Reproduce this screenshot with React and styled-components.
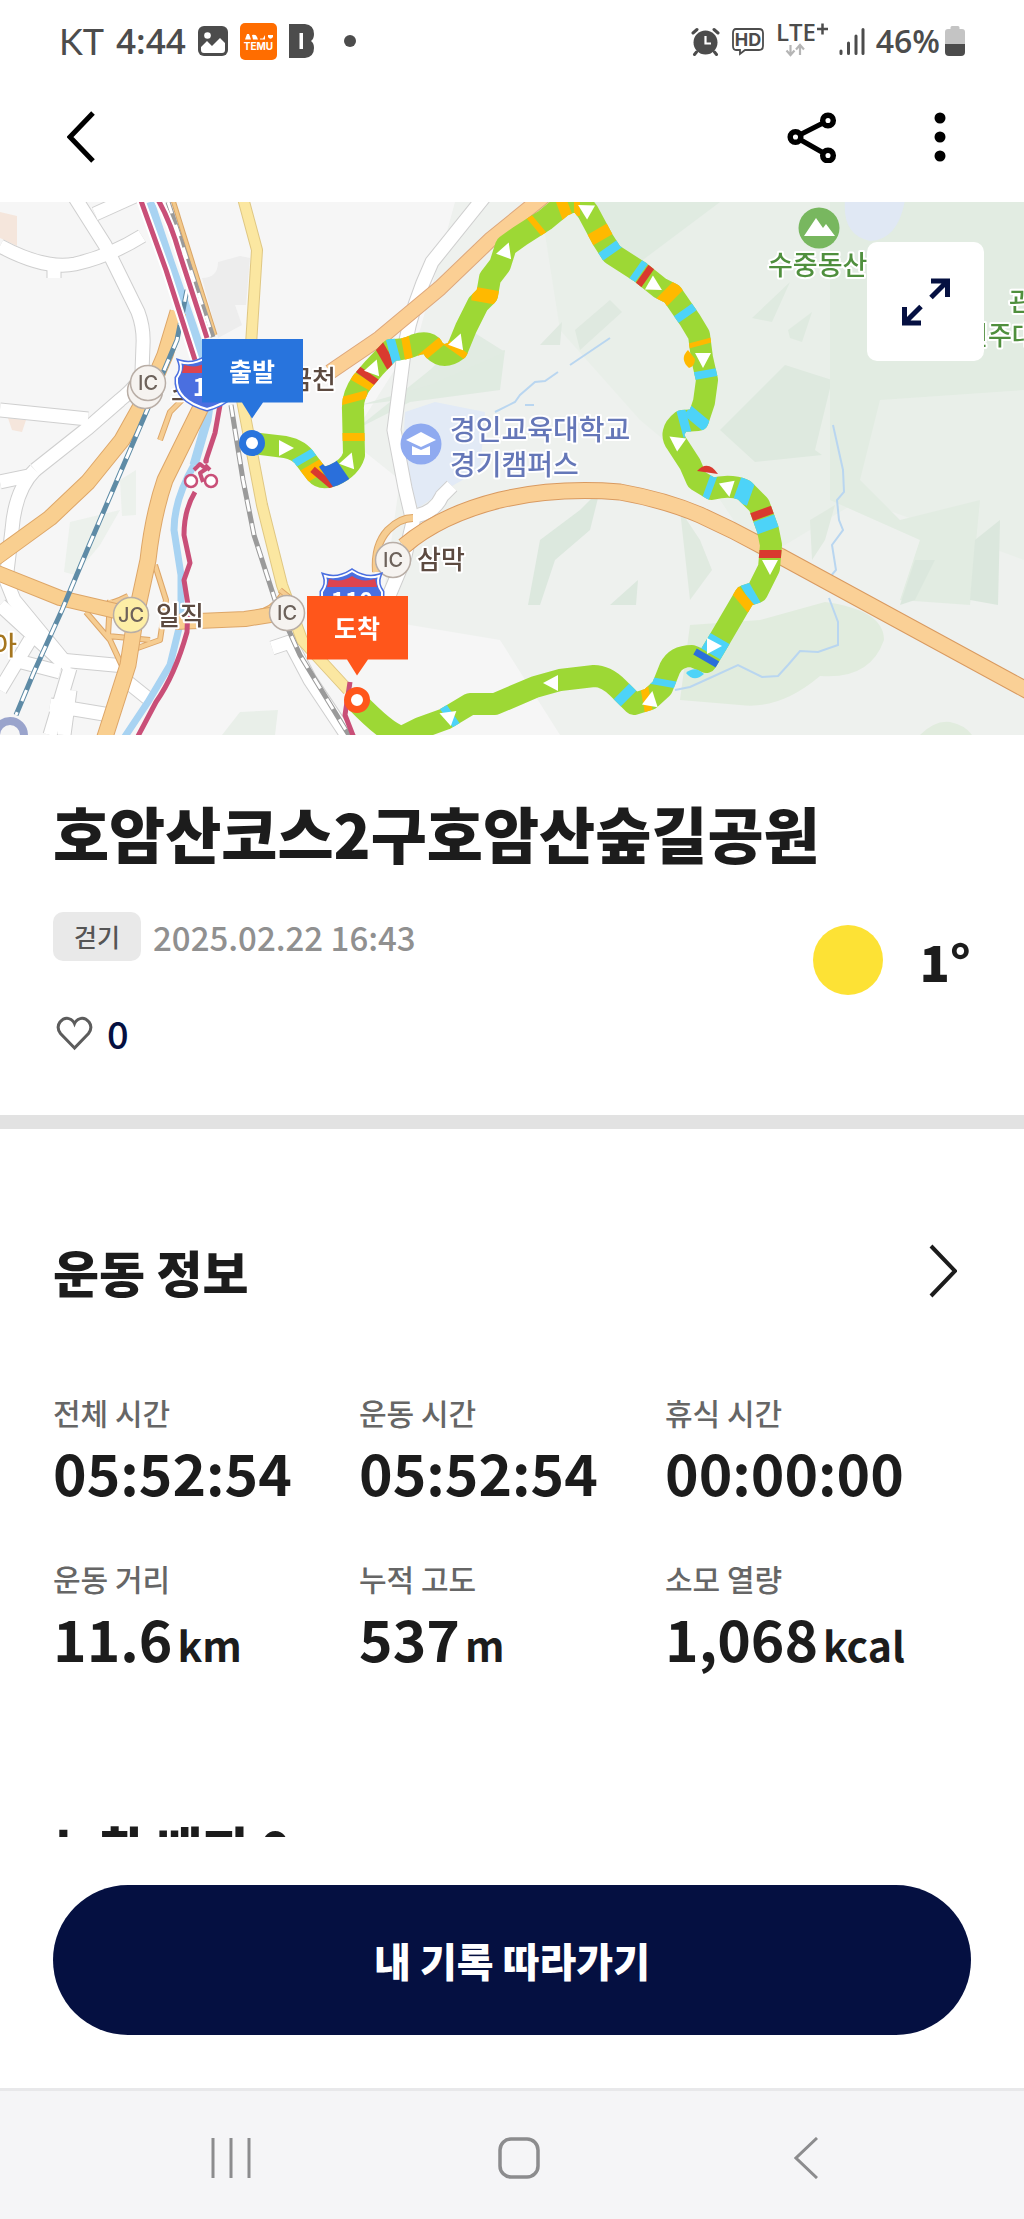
import React from "react";
import styled, { createGlobalStyle } from "styled-components";

const sans = `"Noto Sans CJK KR", "Noto Sans", sans-serif`;
const ink = "#1c1c1c";
const navy = "#051041";

const GlobalStyle = createGlobalStyle`
  *, *::before, *::after { box-sizing: border-box; }
  body { margin: 0; background: #fff; color: ${ink}; font-family: ${sans}; }
  h1, h2, p, dl, dt, dd { margin: 0; }
  button { border: 0; padding: 0; background: none; font-family: inherit; cursor: pointer; }
  svg { display: block; flex: none; }
`;

const Shell = styled.div`
  display: flex;
  flex-direction: column;
  height: 100vh;
`;

const StatusBar = styled.div`
  display: flex;
  justify-content: space-between;
  align-items: center;
  flex: none;
  height: 82px;
  padding: 0 59px;
  color: #4c4c4c;
`;

const StatusGroup = styled.div`
  display: flex;
  align-items: center;
  gap: ${(p) => p.$gap}px;
`;

const StatusText = styled.span`
  font-family: ${(p) => (p.$light ? `Lato, sans-serif` : `"Open Sans", sans-serif`)};
  font-size: ${(p) => p.$size}px;
  font-weight: ${(p) => (p.$light ? 400 : 600)};
  line-height: 40px;
`;

const AppBar = styled.header`
  display: flex;
  justify-content: space-between;
  align-items: center;
  flex: none;
  height: 120px;
  padding: 0 56px 10px 53px;
`;

const BarActions = styled.div`
  display: flex;
  gap: 72px;
`;

const IconButton = styled.button`
  display: flex;
  align-items: center;
  justify-content: center;
  width: 56px;
  height: 60px;
`;

const Content = styled.main`
  flex: 1;
  min-height: 0;
  overflow-y: auto;
  scrollbar-width: none;
`;

const MapPanel = styled.div`
  position: relative;
  aspect-ratio: 1024 / 533;
  overflow: hidden;
  background: #f5f5f5;
`;

const MapSvg = styled.svg`
  width: 100%;
  height: 100%;
  font-family: ${sans};
`;

const ExpandButton = styled.button`
  position: absolute;
  top: 40px;
  right: 40px;
  display: flex;
  align-items: center;
  justify-content: center;
  width: 117px;
  height: 119px;
  border-radius: 10px;
  background: #fff;
`;

const Summary = styled.section`
  padding: 61px 53px 62px;
  border-bottom: 14px solid #e2e2e2;
`;

const CourseTitle = styled.h1`
  font-size: 61px;
  font-weight: 900;
  line-height: 74px;
`;

const SummaryRow = styled.div`
  display: flex;
  justify-content: space-between;
  align-items: flex-start;
  margin-top: 42px;
`;

const MetaColumn = styled.div`
  display: flex;
  flex-direction: column;
  gap: 52px;
`;

const MetaLine = styled.div`
  display: flex;
  align-items: center;
  gap: 12px;
`;

const Badge = styled.span`
  padding: 0 21px;
  border-radius: 10px;
  background: #e9e9e9;
  color: #555;
  font-size: 25px;
  font-weight: 500;
  line-height: 49px;
`;

const DateText = styled.time`
  color: #909090;
  font-size: 33px;
  font-weight: 500;
  line-height: 48px;
`;

const LikeButton = styled.button`
  display: flex;
  align-items: center;
  align-self: flex-start;
  gap: 12px;
  height: 40px;
  color: ${navy};
  font-size: 38px;
  font-weight: 500;
  line-height: 40px;
`;

const Weather = styled.div`
  display: flex;
  align-items: center;
  gap: 36px;
  height: 96px;
  font-size: 50px;
  font-weight: 900;
  line-height: 80px;
`;

const Sun = styled.span`
  width: 70px;
  height: 70px;
  border-radius: 50%;
  background: #fde235;
`;

const Info = styled.section`
  padding: 112px 53px 0;
`;

const InfoHeader = styled.div`
  display: flex;
  justify-content: space-between;
  align-items: center;
`;

const SectionTitle = styled.h2`
  font-size: 50px;
  font-weight: 900;
  line-height: 60px;
`;

const StatGrid = styled.dl`
  display: grid;
  grid-template-columns: repeat(3, 1fr);
  row-gap: 54px;
  margin-top: 91px;
`;

const StatLabel = styled.dt`
  color: #666;
  font-size: 30px;
  font-weight: 500;
  line-height: 40px;
`;

const StatValue = styled.dd`
  display: flex;
  align-items: baseline;
  gap: 5px;
  margin-top: 7px;
  font-size: 57px;
  font-weight: 700;
  line-height: 65px;
  white-space: nowrap;
`;

const Unit = styled.span`
  font-size: 41px;
`;

const Badges = styled.section`
  padding: 140px 53px 48px;
`;

const BottomBar = styled.footer`
  flex: none;
  padding: 48px 53px 53px;
  background: #fff;
`;

const FollowButton = styled.button`
  width: 100%;
  height: 150px;
  border-radius: 75px;
  background: ${navy};
  color: #fff;
  font-size: 40px;
  font-weight: 900;
`;

const NavBar = styled.nav`
  display: flex;
  justify-content: space-between;
  align-items: center;
  flex: none;
  height: 131px;
  padding: 6px 190px 0 203px;
  border-top: 3px solid #e8e8ea;
  background: #f5f5f7;
`;

/* ---------- icons ---------- */

const PhotoIcon = () => (
  <svg width="30" height="30" viewBox="0 0 30 30">
    <rect width="30" height="30" rx="6" fill="#4c4c4c" />
    <circle cx="9.500" cy="9.500" r="3.300" fill="#fff" />
    <path d="M3 21 L9 15 L14 20 L22 12 L27 17 V24 Q27 27 24 27 H6 Q3 27 3 24 Z" fill="#fff" />
  </svg>
);

const TemuIcon = () => (
  <svg width="37" height="37" viewBox="0 0 37 37">
    <rect width="37" height="37" rx="5" fill="#ff6d00" />
    <path d="M5 16.500 L7 11 H9 L11 16.500 Z M12 12 q4 -1 5 2 l1 2.500 h-5 z M20 15.500 h3 l2 -3.500 v4.500 h-5 z M28 12 h5 v2 q-2.500 3.500 -5 0 z" fill="#fff" />
    <text x="18.500" y="26.500" textAnchor="middle" fontFamily="Inter, sans-serif" fontSize="10" fontWeight="700" fill="#fff">TEMU</text>
  </svg>
);

const BlockBIcon = () => (
  <svg width="25" height="34" viewBox="0 0 25 34">
    <path fillRule="evenodd" fill="#4c4c4c" d="M0 0 H16 Q25 1 25 10 Q25 15 22 17 Q25 19 25 24 Q25 33 16 34 H0 Z M10.500 9 V25 H14 V9 Z" />
  </svg>
);

const AlarmIcon = () => (
  <svg width="29" height="29" viewBox="0 0 29 29">
    <circle cx="14.500" cy="15.500" r="12" fill="#4c4c4c" />
    <path d="M14.500 9 V16.500 H20" fill="none" stroke="#fff" strokeWidth="2.200" />
    <path d="M2 6 L6 2.500 M23 2.500 L27 6 M5.500 25 L3.500 27.500 M23.500 25 L25.500 27.500" stroke="#4c4c4c" strokeWidth="3" strokeLinecap="round" />
  </svg>
);

const HdIcon = () => (
  <svg width="34" height="29" viewBox="0 0 34 29">
    <path d="M5 2 H28 Q32 2 32 6 V19 Q32 23 28 23 H14 L9 27 V23 H5 Q2 23 2 19 V6 Q2 2 5 2 Z" fill="none" stroke="#4c4c4c" strokeWidth="1.800" />
    <text x="17" y="19" textAnchor="middle" fontFamily="Inter, sans-serif" fontSize="18" fontWeight="700" fill="#4c4c4c">HD</text>
  </svg>
);

const LteIcon = () => (
  <svg width="52" height="52" viewBox="0 -8 52 52">
    <text x="0" y="18" fontFamily='"Open Sans", sans-serif' fontSize="24" fontWeight="600" fill="#4c4c4c">LTE</text>
    <path d="M41 6 H52 M46.500 0.500 V11.500" stroke="#4c4c4c" strokeWidth="2.500" />
    <path d="M14.500 22 V31 M10.500 27.500 L14.500 32 L18.500 27.500 M24 32 V23 M20 26.500 L24 22 L28 26.500" fill="none" stroke="#b5b5b5" strokeWidth="2.200" />
  </svg>
);

const SignalIcon = () => (
  <svg width="26" height="27" viewBox="0 0 26 27">
    <path d="M2 23 V25.500 M9.500 15 V25.500 M17 8 V25.500 M24 1.500 V25.500" stroke="#4c4c4c" strokeWidth="3" strokeLinecap="round" />
  </svg>
);

const BatteryIcon = () => (
  <svg width="20" height="30" viewBox="0 0 20 30">
    <path d="M5.500 3 V1.500 Q5.500 0 7 0 H13 Q14.500 0 14.500 1.500 V3 H17 Q20 3 20 6 V18 H0 V6 Q0 3 3 3 Z" fill="#c4c4c4" />
    <path d="M0 18 H20 V26 Q20 30 16 30 H4 Q0 30 0 26 Z" fill="#4c4c4c" />
  </svg>
);

const ShareIcon = () => (
  <svg width="50" height="52" viewBox="0 0 50 52" fill="none" stroke="#000">
    <path d="M8.500 26 L41 9.500 M8.500 26 L41 44.500" strokeWidth="5" />
    <g strokeWidth="5.500" fill="#fff">
      <circle cx="8.500" cy="26" r="5.300" />
      <circle cx="41" cy="9.500" r="5.300" />
      <circle cx="41" cy="44.500" r="5.300" />
    </g>
  </svg>
);

/* ---------- map ---------- */

const COLORS = { g: "#9dd835", y: "#ffb900", c: "#4dd3f8", r: "#d93a2f", b: "#2a6fdb" };

const ROUTE =
  "M252 443 L285 447 Q300 450 306 460 L316 473 Q322 480 334 475 Q350 468 354 455 L353 410 Q352 396 362 382 L374 368 L391 350 Q405 350 415 345 Q430 340 434 350 Q444 360 457 350 L466 328 L478 304 L487 295 L490 278 L500 265 L506 246 L520 236 L545 220 L562 206 L578 199 L588 212 L603 240 L612 254 L640 272 L660 288 L672 294 L690 320 L699 335 L702 358 L707 380 L704 402 L698 420 L682 421 Q668 432 677 444 L690 464 L697 480 L712 489 Q730 484 744 490 L759 505 L768 530 L771 545 L769 568 L757 592 L745 596 L718 642 L706 662 L692 656 Q676 656 670 668 L662 688 L650 699 L634 704 L618 688 Q606 676 594 676 L560 680 L535 687 L495 704 L470 704 L445 719 L420 728 L402 737 Q388 734 357 702";

/* Short coloured stretches: centre, heading in degrees, length, colour. */
const STRETCHES = [
  [307, 456, 60, 8, "c"], [315, 470, 60, 14, "y"], [324, 479, -50, 7, "r"], [335, 474, -35, 18, "b"],
  [353, 437, 90, 8, "y"], [353, 398, 75, 8, "y"], [361, 381, -60, 8, "y"], [366, 375, -55, 7, "r"],
  [384, 354, -30, 10, "r"], [393, 349, -15, 9, "c"], [407, 348, -10, 8, "y"], [432, 349, 50, 9, "y"],
  [457, 350, -55, 7, "y"], [487, 296, -80, 14, "y"], [537, 226, -40, 6, "y"], [564, 208, -20, 11, "y"],
  [577, 201, 0, 6, "y"], [599, 235, 60, 12, "y"], [609, 251, 55, 9, "c"], [638, 272, 35, 7, "c"],
  [645, 276, 35, 7, "r"], [671, 293, 45, 13, "y"], [687, 312, 55, 8, "c"], [700, 343, 75, 5, "y"],
  [706, 374, 80, 8, "c"], [699, 420, 130, 12, "c"], [684, 422, 165, 9, "c"], [709, 489, 20, 7, "c"],
  [745, 489, 20, 15, "c"], [763, 513, 70, 8, "r"], [767, 524, 70, 13, "c"], [771, 554, 90, 8, "r"],
  [750, 593, 150, 9, "c"], [742, 598, 140, 10, "y"], [715, 646, 120, 18, "c"], [708, 659, 120, 7, "b"],
  [665, 683, 100, 7, "c"], [647, 702, 170, 8, "y"], [623, 697, 225, 10, "c"], [449, 715, 145, 8, "c"],
];

const ARROWS = [
  [286, 448, 0], [349, 460, -70], [374, 367, -70], [458, 341, -70], [506, 250, -70], [585, 209, 210],
  [655, 286, 30], [703, 360, 90], [676, 441, 215], [728, 489, 80], [770, 567, 90], [714, 646, 0],
  [651, 699, -80], [551, 683, 180], [447, 716, 200],
];

const WHITE_ROADS = [
  "M74 196 L105 245 L138 312 Q144 328 143 345 L142 372 Q140 384 120 400 L88 428 L35 470",
  "M0 246 Q45 270 75 264 Q110 256 142 236",
  "M54 262 V278",
  "M95 214 L135 196",
  "M0 410 L88 419",
  "M35 470 Q15 490 12 530 L6 580 L14 600 L70 668",
  "M0 482 L28 476",
  "M0 605 L60 660 L125 666 M30 640 L0 690 M70 668 L50 735 M14 660 L60 672 M50 705 L110 715 M70 690 L64 735 M125 680 L150 700",
  "M485 196 L432 262 Q412 305 405 345 L394 430 L405 488 L413 522 L404 560 L388 598",
  "M416 516 Q435 512 442 496 L452 486",
  "M272 648 L290 642 L310 680 L350 740",
];

const WOODS = [
  ["#eef1ee", "M455 202 H1024 V735 H560 L500 640 L380 620 L400 480 L350 440 L420 330 Z"],
  ["#e9efe9", "M540 202 H1024 V560 L860 500 L760 560 L700 470 L640 420 L560 330 Z"],
  ["#e0ebe1", "M590 202 H720 L640 262 L600 250 Z"],
  ["#e0ebe1", "M355 430 L430 370 L505 350 L500 390 L410 402 Z"],
  ["#e1ebe2", "M360 405 L430 385 L505 352 L470 330 L400 400 Z"],
  ["#dfe9e0", "M575 330 L610 300 L622 312 L580 350 Z M540 345 L562 322 L560 345 Z"],
  ["#dee9df", "M720 430 L785 365 L832 380 L815 450 L822 455 L755 462 Z"],
  ["#dfeae0", "M752 318 L790 282 L772 322 Z M788 330 L812 312 L802 342 L790 338 Z"],
  ["#e2ece2", "M830 202 H1024 V390 L880 400 L860 480 L900 520 L980 500 L970 605 L900 600 L920 540 L830 500 Z"],
  ["#dce8de", "M540 540 L580 510 L600 490 L590 530 L555 560 L540 605 L528 605 Z M610 605 L638 580 L636 605 Z"],
  ["#e0eae0", "M690 600 L680 510 L700 540 L712 570 Z M810 520 L835 505 L825 540 L812 560 Z"],
  ["#dbe7dd", "M900 605 L915 560 L935 560 L915 600 Z M970 600 L975 540 L1000 520 L998 605 Z"],
  ["#e1ecde", "M690 625 L760 620 L825 602 Q884 610 884 640 Q870 680 820 676 Q780 710 740 705 L680 700 Z"],
  ["#e1ecde", "M920 735 Q935 720 950 722 Q965 725 972 735 Z"],
  ["#ecf1ec", "M70 522 L120 510 L100 545 L75 575 L64 572 Z M120 480 L136 470 V515 L122 516 Z"],
  ["#e9efe9", "M222 735 L240 712 L278 710 L275 735 Z"],
  ["#ededed", "M202 278 Q218 278 218 262 L240 256 L250 258 L246 305 L235 305 L242 325 L218 338 Z"],
  ["#f5e6dc", "M0 212 L17 216 V246 L0 238 Z M8 418 L26 420 L22 432 L12 430 Z"],
  ["#e0e8f4", "M845 200 Q842 235 870 241 Q898 240 905 200 Z"],
  ["#e2eaf6", "M405 412 L435 402 L485 412 L480 470 L445 490 L418 508 L402 470 Z"],
];

const Cased = ({ d, color, edge, width }) => (
  <g fill="none" strokeLinejoin="round">
    <path d={d} stroke={edge} strokeWidth={width + 2} />
    <path d={d} stroke={color} strokeWidth={width} />
  </g>
);

const Railway = ({ d, color }) => (
  <g fill="none">
    <path d={d} stroke={color} strokeWidth="5" />
    <path d={d} stroke="#fff" strokeWidth="3" strokeDasharray="12 12" />
  </g>
);

const Junction = ({ x, y, children, fill = "#f6f3f0" }) => (
  <g>
    <circle cx={x} cy={y} r="17.500" fill={fill} stroke="#b9aea6" strokeWidth="1.500" />
    {children && (
      <text x={x} y={y + 7} textAnchor="middle" fontFamily="Inter, sans-serif" fontSize="20" fontWeight="500" fill="#6d625b">{children}</text>
    )}
  </g>
);

const Place = ({ x, y, color, children, size = 26, anchor = "start" }) => (
  <text x={x} y={y} textAnchor={anchor} fontSize={size} fontWeight="500" fill={color} stroke="#fff" strokeWidth="4" strokeLinejoin="round" paintOrder="stroke">{children}</text>
);

const Shield = ({ x, y, children }) => (
  <g transform={`translate(${x} ${y})`}>
    <path d="M-27 -20 Q-14 -16 0 -25 Q14 -16 27 -20 Q24 -12 30 -4 Q32 18 0 27 Q-32 18 -30 -4 Q-24 -12 -27 -20 Z" fill="#4a6fe0" stroke="#4a6fe0" strokeWidth="5" />
    <path d="M-27 -20 Q-14 -16 0 -25 Q14 -16 27 -20 Q24 -12 30 -4 Q32 18 0 27 Q-32 18 -30 -4 Q-24 -12 -27 -20 Z" fill="#4a6fe0" stroke="#fff" strokeWidth="2" />
    <path d="M-23 -17 Q-10 -13 0 -20 Q10 -13 23 -17 L25 -9 H-25 Z" fill="#dc4450" />
    <text y="14" textAnchor="middle" fontSize="24" fontWeight="700" fill="#fff">{children}</text>
  </g>
);

const Pin = ({ x, y, color, children }) => (
  <g>
    <path d={`M${x - 50} ${y - 104} h101 v63.500 h-40 l-11 16 l-10 -16 h-40 z`} fill={color} />
    <text x={x} y={y - 62} textAnchor="middle" fontSize="25" fontWeight="700" fill="#fff">{children}</text>
    <circle cx={x} cy={y} r="9.500" fill="#fff" stroke={color} strokeWidth="7" />
  </g>
);

const CourseMap = () => (
  <MapSvg viewBox="0 202 1024 533" preserveAspectRatio="xMidYMid slice" role="img" aria-label="코스 지도">
    <defs>
      <mask id="route-band" maskUnits="userSpaceOnUse" x="0" y="202" width="1024" height="533">
        <path d={ROUTE} fill="none" stroke="#fff" strokeWidth="22" strokeLinejoin="round" />
      </mask>
    </defs>
    <rect y="202" width="1024" height="533" fill="#f6f6f6" />
    {WOODS.map(([fill, d]) => <path key={d} d={d} fill={fill} />)}

    <g fill="none" stroke="#b9d6f0" strokeWidth="2">
      <path d="M610 338 L570 365 M558 372 L545 381 L535 382 L520 395 L515 402 L495 412 M525 405 L534 405" />
      <path d="M833 425 L843 470 L844 492 L837 500 L839 520 L843 530 L832 545 L836 570 L830 577 M829 598 L838 622 L838 645 L818 652 L800 651 L788 665 L778 676 L762 677 L738 665 L712 677 L690 687 L675 690" />
    </g>

    {WHITE_ROADS.map((d) => <path key={d} d={d} fill="none" stroke="#cfcfcf" strokeWidth="15" />)}
    {WHITE_ROADS.map((d) => <path key={d} d={d} fill="none" stroke="#fff" strokeWidth="13" />)}

    <g fill="none" stroke="#a8d3f2">
      <path d="M150 202 L170 262 L192 325 L212 385 L207 420 L194 465" strokeWidth="9" />
      <path d="M194 465 Q174 500 174 530 L181 575 V620 L170 665 L148 702 L124 738" strokeWidth="7" />
    </g>

    <Cased d="M173 200 L215 335" color="#f3c98a" edge="#d9a566" width={3} />
    <Cased d="M243 198 L257 250 L251 345 L242 400 L262 505 L282 585 L302 640 L348 690" color="#fbe7a1" edge="#dfc783" width={10} />
    <Cased d="M182 400 L170 412 L160 440 M155 565 L166 600 L160 640 L132 650 M86 612 L110 640 L123 668 M128 596 Q112 604 104 604 M110 600 L108 636 L150 640 M282 595 Q272 612 250 614 M280 590 L300 606" color="#f6cd92" edge="#dda668" width={4} />
    <Cased d="M178 312 L165 355 L150 390 L122 440 L88 482 L50 518 L-5 558" color="#f9cf90" edge="#dda668" width={15} />
    <Cased d="M202 405 L165 480 Q153 515 148 560 L135 620 L128 665 L104 740" color="#f9cf90" edge="#dda668" width={15} />
    <Cased d="M-5 572 L60 598 L120 612 M175 622 L245 619 L295 611" color="#f9cf90" edge="#dda668" width={14} />
    <Cased d="M544 196 L490 240 L440 288 L380 338 L330 372" color="#fbcf94" edge="#dda77c" width={14} />
    <Cased d="M376 572 Q374 545 388 530 Q400 518 413 518" color="#f6cd92" edge="#dda668" width={6} />
    <Cased d="M404 546 Q440 515 500 500 Q555 487 620 492 Q665 500 700 515 Q740 533 780 556 L1030 692" color="#fad096" edge="#d99a60" width={15} />

    <Railway d="M168 202 L213 337 M231 405 L243 480 L254 535 L275 600 L300 655 L352 740" color="#9a9a9a" />
    <Railway d="M187 290 L177 340 L148 408 L118 478 L88 548 L62 610 L34 672 L16 715" color="#5e8ba6" />

    <g fill="none" strokeLinejoin="round" stroke="#fff" strokeWidth="9">
      <path d="M140 198 L166 270 L195 360 M157 198 Q170 220 180 255 L207 338" />
    </g>
    <g fill="none" strokeLinejoin="round" stroke="#c94f78" strokeWidth="5">
      <path d="M140 198 L166 270 L195 360 M157 198 Q170 220 180 255 L207 338 M220 405 L215 433 L206 460 M195 492 Q184 510 184 535 L190 563 L184 580 L188 605 L187 632 Q175 675 156 702 L137 738 M350 682 L345 715 L354 738" />
      <g strokeWidth="2.500">
        <circle cx="191" cy="481" r="6" fill="#fff" />
        <circle cx="211" cy="481" r="6" fill="#fff" />
        <path d="M194 470 L200 464 L206 469 L200 473 L203 482 M205 465 L210 470" strokeWidth="4" />
        <circle cx="206" cy="461" r="1.500" />
      </g>
    </g>

    <path d={ROUTE} fill="none" stroke={COLORS.g} strokeWidth="22" strokeLinejoin="round" />
    <g mask="url(#route-band)">
      {STRETCHES.map(([x, y, a, len, c]) => (
        <rect key={`${x}-${y}`} x={-len / 2} y="-15" width={len} height="30" fill={COLORS[c]} transform={`translate(${x} ${y}) rotate(${a})`} />
      ))}
    </g>
    <path d="M697 471 Q708 459 718 474 Z" fill={COLORS.r} />
    <path d="M686 673 Q695 665 704 674 Q694 683 686 673 Z" fill={COLORS.c} />
    <path d="M688 350 Q679 359 689 368 Q695 366 695 359 Z" fill={COLORS.y} />
    {ARROWS.map(([x, y, a]) => (
      <path key={`${x}-${y}`} d="M-7 -8 L8 0 L-7 8 Z" fill="#fff" transform={`translate(${x} ${y}) rotate(${a})`} />
    ))}

    <Place x={171} y={401} color="#5c4a40">소하</Place>
    <Junction x={145} y={391} />
    <Junction x={148} y={383}>IC</Junction>
    <Junction x={131} y={615} fill="#fdeea6">JC</Junction>
    <Junction x={287} y={613}>IC</Junction>
    <Junction x={393} y={560}>IC</Junction>
    <Shield x={207} y={382}>15</Shield>
    <Shield x={352} y={596}>110</Shield>
    <Place x={336} y={389} color="#5c4a40" anchor="end">금천</Place>
    <Place x={156} y={625} color="#5c4a40">일직</Place>
    <Place x={417} y={569} color="#5c4a40">삼막</Place>
    <Place x={17} y={655} color="#a5761f" anchor="end">아</Place>
    <Place x={450} y={440} color="#6577b8" size={28}>경인교육대학교</Place>
    <Place x={450} y={475} color="#6577b8" size={28}>경기캠퍼스</Place>
    <Place x={768} y={275} color="#4f8f3d" size={27}>수중동산</Place>
    <Place x={1009} y={311} color="#4f8f3d">관악산</Place>
    <Place x={964} y={345} color="#4f8f3d">전주대</Place>

    <circle cx="421" cy="444" r="20.500" fill="#8faaf0" />
    <path d="M421 432 L436 440 L421 447 L406 440 Z M412 446 L421 450 L430 446 V455 H412 Z" fill="#fff" />
    <circle cx="819" cy="228" r="20.500" fill="#78b75f" />
    <path d="M804 236 L816 218 L823 228 L826 224 L835 236 Z" fill="#fff" />
    <circle cx="10" cy="735" r="14" fill="none" stroke="#9aa4cc" strokeWidth="8" />

    <Pin x={252} y={443} color="#2874dd">출발</Pin>
    <Pin x={357} y={700} color="#ff561b">도착</Pin>
  </MapSvg>
);

/* ---------- screen ---------- */

const STATS = [
  { label: "전체 시간", value: "05:52:54" },
  { label: "운동 시간", value: "05:52:54" },
  { label: "휴식 시간", value: "00:00:00" },
  { label: "운동 거리", value: "11.6", unit: "km" },
  { label: "누적 고도", value: "537", unit: "m" },
  { label: "소모 열량", value: "1,068", unit: "kcal" },
];

export default function App() {
  return (
    <Shell>
      <GlobalStyle />
      <StatusBar>
        <StatusGroup $gap={12}>
          <StatusText $light $size={36}>KT</StatusText>
          <StatusText $size={35}>4:44</StatusText>
          <PhotoIcon />
          <TemuIcon />
          <BlockBIcon />
          <svg width="46" height="12" viewBox="0 0 46 12"><circle cx="24" cy="6" r="6" fill="#4c4c4c" /></svg>
        </StatusGroup>
        <StatusGroup $gap={11}>
          <AlarmIcon />
          <HdIcon />
          <LteIcon />
          <SignalIcon />
          <StatusGroup $gap={5}>
            <StatusText $size={32}>46%</StatusText>
            <BatteryIcon />
          </StatusGroup>
        </StatusGroup>
      </StatusBar>

      <AppBar>
        <IconButton aria-label="뒤로">
          <svg width="28" height="52" viewBox="0 0 28 52"><path d="M26 2 L3 26 L26 50" fill="none" stroke="#000" strokeWidth="5" /></svg>
        </IconButton>
        <BarActions>
          <IconButton aria-label="공유"><ShareIcon /></IconButton>
          <IconButton aria-label="더보기">
            <svg width="12" height="50" viewBox="0 0 12 50"><circle cx="6" cy="6" r="5.500" /><circle cx="6" cy="25" r="5.500" /><circle cx="6" cy="44" r="5.500" /></svg>
          </IconButton>
        </BarActions>
      </AppBar>

      <Content>
        <MapPanel>
          <CourseMap />
          <ExpandButton aria-label="지도 확대">
            <svg width="50" height="50" viewBox="0 0 50 50" fill="none" stroke={navy} strokeWidth="5">
              <path d="M30 4 H46.500 V20 M46 4.500 L30 20.500 M20 46 H3.500 V30 M4 45.500 L20 29.500" />
            </svg>
          </ExpandButton>
        </MapPanel>

        <Summary>
          <CourseTitle>호암산코스2구호암산숲길공원</CourseTitle>
          <SummaryRow>
            <MetaColumn>
              <MetaLine>
                <Badge>걷기</Badge>
                <DateText dateTime="2025-02-22T16:43">2025.02.22 16:43</DateText>
              </MetaLine>
              <LikeButton aria-label="좋아요 0">
                <svg width="42" height="36" viewBox="0 0 42 36">
                  <path d="M21.500 33 L7.500 18.500 Q3 12.500 7 7 Q12 1 18 4.500 Q20.500 6 21.500 8.500 Q22.500 6 25 4.500 Q31 1 36 7 Q40 12.500 35.500 18.500 Z" fill="none" stroke="#5c5c5c" strokeWidth="3" />
                </svg>
                0
              </LikeButton>
            </MetaColumn>
            <Weather>
              <Sun role="img" aria-label="맑음" />
              <span>1°</span>
            </Weather>
          </SummaryRow>
        </Summary>

        <Info>
          <InfoHeader>
            <SectionTitle>운동 정보</SectionTitle>
            <IconButton aria-label="운동 정보 더보기">
              <svg width="28" height="54" viewBox="0 0 28 54"><path d="M2 2 L26 27 L2 52" fill="none" stroke={ink} strokeWidth="4" /></svg>
            </IconButton>
          </InfoHeader>
          <StatGrid>
            {STATS.map(({ label, value, unit }) => (
              <div key={label}>
                <StatLabel>{label}</StatLabel>
                <StatValue>{value}{unit && <Unit>{unit}</Unit>}</StatValue>
              </div>
            ))}
          </StatGrid>
        </Info>

        <Badges>
          <SectionTitle>노착 배지 0</SectionTitle>
        </Badges>
      </Content>

      <BottomBar>
        <FollowButton>내 기록 따라가기</FollowButton>
      </BottomBar>

      <NavBar>
        <IconButton aria-label="최근 앱">
          <svg width="40" height="42" viewBox="0 0 40 42"><path d="M2 1 V41 M20 1 V41 M38 1 V41" stroke="#8c8c8e" strokeWidth="3" /></svg>
        </IconButton>
        <IconButton aria-label="홈">
          <svg width="42" height="42" viewBox="0 0 42 42"><rect x="2" y="2" width="38" height="38" rx="11" fill="none" stroke="#8c8c8e" strokeWidth="3.500" /></svg>
        </IconButton>
        <IconButton aria-label="이전">
          <svg width="24" height="42" viewBox="0 0 24 42"><path d="M23 1 L2 21 L23 41" fill="none" stroke="#8c8c8e" strokeWidth="3" /></svg>
        </IconButton>
      </NavBar>
    </Shell>
  );
}
